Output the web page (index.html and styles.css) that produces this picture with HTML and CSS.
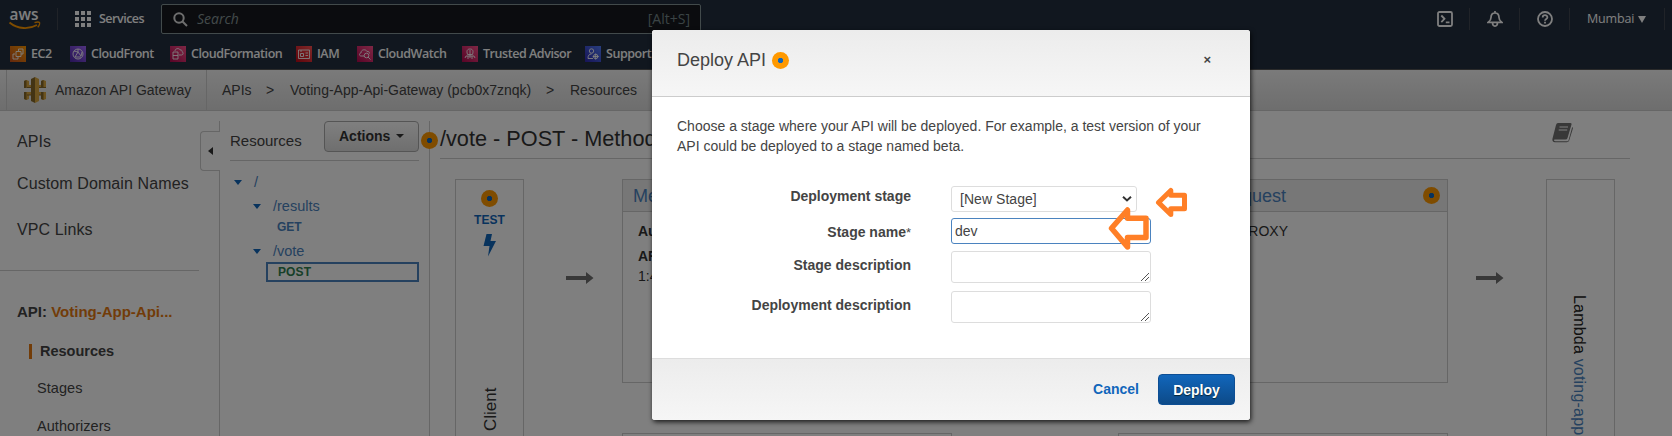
FILE: index.html
```html
<!DOCTYPE html>
<html lang="en">
<head>
<meta charset="utf-8">
<title>API Gateway</title>
<link rel="stylesheet" href="styles.css">
</head>
<body>
<div class="page">
  <header class="nav">
    <div class="nav-top">
      <svg class="aws" width="32" height="22" viewBox="0 0 32 22"><text x="0.5" y="11.5" class="aws-text" textLength="29" lengthAdjust="spacingAndGlyphs">aws</text><path d="M0.5 14.500C9 21.500 20 21.500 28 17" fill="none" stroke="#f90" stroke-width="1.900"/><path d="M25.500 14.700c2-.9 4.500-.8 5-.2s-.1 3-1.800 4.800" fill="none" stroke="#f90" stroke-width="1.300"/></svg>
      <i class="rule"></i>
      <svg class="grid" width="16" height="16" viewBox="0 0 16 16" fill="#fff"><path d="M0 0h4v4H0zM6 0h4v4H6zM12 0h4v4h-4zM0 6h4v4H0zM6 6h4v4H6zM12 6h4v4h-4zM0 12h4v4H0zM6 12h4v4H6zM12 12h4v4h-4z"/></svg>
      <span class="services">Services</span>
      <div class="search">
        <svg width="15" height="15" viewBox="0 0 15 15" fill="none" stroke="#ddd" stroke-width="2"><circle cx="6" cy="6" r="4.700"/><path d="M9.500 9.500l4.500 4.500"/></svg>
        <span class="search-hint">Search</span><span class="search-key">[Alt+S]</span>
      </div>
      <div class="tools">
        <svg width="16" height="16" viewBox="0 0 16 16" fill="none" stroke="#fff" stroke-width="1.800"><rect x="1" y="1" width="14" height="14" rx="1.500"/><path d="M4.300 4.500l3.200 3.300-3.200 3.400M8.800 11.300h3.700"/></svg>
        <i class="rule"></i>
        <svg width="16" height="16" viewBox="0 0 16 16" fill="none" stroke="#fff" stroke-width="1.700"><path d="M8 0v2M1.300 11.300h13.400c-2-1.500-2.700-3-2.700-4.800C12 3.500 10.500 2 8 2S4 3.500 4 6.500c0 1.800-.7 3.300-2.700 4.800zM5.500 11.500c0 4.700 5 4.700 5 0"/></svg>
        <i class="rule"></i>
        <svg width="16" height="16" viewBox="0 0 16 16" fill="none" stroke="#fff" stroke-width="1.800"><circle cx="8" cy="8" r="7"/><path d="M5.700 6.500c0-3 4.700-3 4.700-.2C10.400 8 8 7.800 8 9.700M8 10.800v1.700"/></svg>
        <i class="rule"></i>
        <span class="region">Mumbai</span><i class="tri"></i><i class="rule"></i>
      </div>
    </div>
    <div class="favs">
      <span class="fav"><svg class="ico orange" viewBox="0 0 16 16"><path d="M6 5.500h5v5H6zM5 8H3v5h5v-2M8.500 5V3H13v5h-2"/></svg><b class="w-ec2">EC2</b></span>
      <span class="fav"><svg class="ico purple" viewBox="0 0 16 16"><circle cx="8" cy="8" r="5"/><path d="M4 5l4 1 3 4M8 6l-3 5M8 3v3M5 11h6M12 6l-1 4"/></svg><b class="w-cf">CloudFront</b></span>
      <span class="fav"><svg class="ico pink" viewBox="0 0 16 16"><path d="M3 6h5v7H3zM3 9.500h5M5 5c0-3 5-3 5-1 2-.5 2 1 2 1.500 1.500.5 1.500 3.500-.5 3.500H9"/></svg><b class="w-cfn">CloudFormation</b></span>
      <span class="fav"><svg class="ico red" viewBox="0 0 16 16"><path d="M2.500 4h11v8.500h-11zM5 4v2M4.500 7.500h3v3h-3zM9.500 7h2.500M9.500 9.500h2.500"/></svg><b class="w-iam">IAM</b></span>
      <span class="fav"><svg class="ico pink" viewBox="0 0 16 16"><path d="M7 10H4C2 10 2 7 4 7c0-4 5-4 6-1.500 2-.5 2.500 1 2.500 2"/><circle cx="9.500" cy="9.500" r="2.300"/><path d="M11 11l2.500 2.500"/></svg><b class="w-cw">CloudWatch</b></span>
      <span class="fav"><svg class="ico pink" viewBox="0 0 16 16"><path d="M5.500 8.500C4 4 6 3 8 3s4 1 2.500 5.500zM8 4v8M4 10h8M4 10l-1 2M6 10v3M10 10v3M12 10l1 2"/></svg><b class="w-ta">Trusted Advisor</b></span>
      <span class="fav"><svg class="ico blue" viewBox="0 0 16 16"><circle cx="6.500" cy="5" r="2.200"/><path d="M8 12.500H3c0-3 1-4.500 3.500-4.500"/><circle cx="10.700" cy="10.500" r="2.200"/><path d="M10.700 7.500v6M7.700 10.500h6"/></svg><b class="w-su">Support</b></span>
    </div>
  </header>
  <div class="crumbs">
    <div class="product">
      <svg width="22" height="26" viewBox="0 0 22 26"><path fill="#d9a741" d="M2.500 3L5 4v4h12V4l2.500-1L22 4v7H0V4zM0 15h22v7l-2.500 1-2.500-1v-4H5v4l-2.500 1L0 22z"/><path fill="#876929" d="M0 4l2.500-1v8H0zM0 15h2.500v8L0 22zM17 4l2.500-1v8H17zM17 15h2.500v8l-2.500-1zM7 2l4-2v26l-4-2z"/><path fill="#d9a741" d="M11 0l4 2v22l-4 2z"/><path fill="#876929" d="M3 10h4v1H3zM15 10h7v1h-7zM3 17.500h4v1H3zM15 17.500h4v1h-4z"/></svg>
      <span>Amazon API Gateway</span>
    </div>
    <span class="c1">APIs</span><span class="c2">&gt;</span><span class="c3">Voting-App-Api-Gateway (pcb0x7znqk)</span><span class="c2">&gt;</span><span class="c4">Resources</span>
  </div>
  <div class="body">
    <nav class="side">
      <div class="side-main"><a>APIs</a><a>Custom Domain Names</a><a>VPC Links</a></div>
      <div class="api-name">API: <em>Voting-App-Api...</em></div>
      <div class="side-sub"><b>Resources</b><a>Stages</a><a>Authorizers</a></div>
    </nav>
    <div class="gutter"><div class="tab"><i></i></div></div>
    <section class="tree">
      <div class="tree-head"><span>Resources</span><button class="actions">Actions<i></i></button></div>
      <div class="node n0"><i></i>/</div>
      <div class="node n1"><i></i>/results</div>
      <div class="verb get">GET</div>
      <div class="node n2"><i></i>/vote</div>
      <div class="verb post">POST</div>
      <i class="dot tree-dot"></i>
    </section>
    <main class="main">
      <div class="main-head"><h1>/vote - POST - Method Execution</h1>
        <svg width="22" height="20" viewBox="0 0 22 20"><path fill="#707070" d="M6 0h12.500q1.500 0 1 1.500L15.500 15q-.4 1.500-2 1.500H3q-1.500.2-1 1t1.500.8h12q.8 0 1-.8L20.200 4q1 .5.7 1.500l-3.700 12q-.6 1.800-2.400 1.800H3Q0 19 .4 16L4 2q.5-2 2-2z"/><path stroke="#fff" stroke-width="1.200" d="M7.500 4h8.500M6.700 7h8.500"/></svg>
      </div>
      <div class="flow">
        <div class="client"><i class="dot"></i><b>TEST</b><svg width="14" height="23" viewBox="0 0 14 23"><path fill="#1166bb" d="M3.500 0H9L7.500 7H13L5 22.500 6.500 12H.5z"/></svg><span>Client</span></div>
        <div class="arrow"><svg width="28" height="12" viewBox="0 0 28 12"><path fill="#707070" d="M0 4h20V0l7.500 6L20 12V8H0z"/></svg></div>
        <div class="stack">
          <div class="card"><h2>Method Request</h2><p><b>Auth:</b></p><p><b>ARN:</b></p><p class="tight">1:4</p></div>
          <div class="card"></div>
        </div>
        <div class="stack second">
          <div class="card right"><h2>Integration Request<i class="dot"></i></h2><p>Type: LAMBDA_PROXY</p></div>
          <div class="card"></div>
        </div>
        <div class="arrow"><svg width="28" height="12" viewBox="0 0 28 12"><path fill="#707070" d="M0 4h20V0l7.500 6L20 12V8H0z"/></svg></div>
        <div class="lambda"><span>Lambda <em>voting-app</em></span></div>
      </div>
    </main>
  </div>
</div>
<div class="overlay">
  <div class="modal">
    <div class="modal-head"><span>Deploy API</span><i class="dot"></i><b>×</b></div>
    <div class="modal-body">
      <p>Choose a stage where your API will be deployed. For example, a test version of your API could be deployed to a stage named beta.</p>
      <div class="form">
        <label class="l1">Deployment stage</label><div class="field select">[New Stage]<svg width="10" height="6" viewBox="0 0 10 6"><path d="M1 .8l4 3.700L9 .8" fill="none" stroke="#333" stroke-width="2"/></svg></div>
        <label class="l2">Stage name<small>*</small></label><div class="field input">dev</div>
        <label class="l3">Stage description</label><div class="field area"><svg width="8" height="8" viewBox="0 0 8 8"><path d="M0 8L8 0M4 8l4-4" stroke="#555"/></svg></div>
        <label class="l3">Deployment description</label><div class="field area"><svg width="8" height="8" viewBox="0 0 8 8"><path d="M0 8L8 0M4 8l4-4" stroke="#555"/></svg></div>
      </div>
    </div>
    <div class="modal-foot"><a>Cancel</a><button>Deploy</button></div>
    <svg class="note small" width="32" height="32" viewBox="0 0 32 32"><path d="M3.500 15.500L15.800 3.500V8.300H29.500V21.800H15.800V27.500z"/></svg>
    <svg class="note large" width="41" height="46" viewBox="0 0 41 46"><path d="M3.500 23.300L19.500 5V13.200H38V32.500H19.500V42z"/></svg>
  </div>
</div>
</body>
</html>
```
FILE: styles.css
```css
* { box-sizing: border-box; }
body { margin: 0; width: 1672px; height: 436px; overflow: hidden; position: relative; font: 14px/20px "Liberation Sans", Arial, sans-serif; color: #444; background: #fff; }
em, i { font-style: normal; }
i { display: block; flex: none; }
svg { display: block; flex: none; }
.page { height: 436px; display: flex; flex-direction: column; overflow: hidden; }

.nav { height: 70px; flex: none; background: #232f3e; border-bottom: 1px solid #555; color: #fff; font-family: "Open Sans", "Noto Sans", sans-serif; }
.nav-top { height: 38px; display: flex; align-items: center; padding-left: 9px; }
.aws { margin-right: 16px; overflow: visible; }
.aws-text { font: 600 17px "Open Sans", sans-serif; fill: #fff; }
.rule { width: 1px; height: 22px; background: #414750; }
.grid { margin-left: 17px; }
.services { margin-left: 8px; width: 62px; font-size: 12.500px; font-weight: 600; letter-spacing: -.5px; }
.search { width: 540px; height: 30px; border: 1px solid #849596; border-radius: 2px; background: #16191f; display: flex; align-items: center; padding: 0 10px 0 11px; color: #879596; }
.search-hint { margin-left: 9px; font-style: italic; }
.search-key { margin-left: auto; color: #75878a; }
.tools { margin-left: auto; display: flex; align-items: center; padding-right: 7px; }
.tools > svg { margin-right: 16px; }
.tools > .rule + svg { margin-left: 17px; }
.region { margin-left: 17px; width: 51px; font-size: 12.500px; letter-spacing: -.15px; }
.tri { border: 4px solid transparent; border-top: 7px solid #fff; border-bottom: 0; margin-right: 18px; }
.favs { height: 32px; display: flex; align-items: center; padding-left: 10px; }
.fav { display: flex; align-items: center; gap: 5px; height: 16px; }
.fav b { font-size: 12.500px; font-weight: 600; letter-spacing: -.45px; white-space: nowrap; }
.ico { width: 16px; height: 16px; fill: none; stroke: #fff; stroke-width: .9; }
.orange { background: linear-gradient(45deg, #c8511b, #f90); }
.purple { background: linear-gradient(45deg, #4d27a8, #a166ff); }
.pink { background: linear-gradient(45deg, #b0084d, #ff4f8b); }
.red { background: linear-gradient(45deg, #bd0816, #ff5252); }
.blue { background: linear-gradient(45deg, #2e27ad, #527fff); }
.w-ec2 { width: 39px; } .w-cf { width: 79px; } .w-cfn { width: 105px; } .w-iam { width: 40px; } .w-cw { width: 84px; } .w-ta { width: 102px; }

.crumbs { height: 41px; flex: none; display: flex; align-items: center; background: linear-gradient(#f5f5f5, #dcdcdc); border-bottom: 1px solid #ccc; }
.product { margin-left: 6px; width: 201px; height: 40px; border: solid #ccc; border-width: 0 1px; display: flex; align-items: center; gap: 9px; padding-left: 17px; }
.c1 { margin-left: 15px; width: 44px; }
.c2 { width: 24px; }
.c3 { width: 256px; white-space: nowrap; }

.body { flex: 1; display: flex; min-height: 0; }
.side { width: 200px; flex: none; font-size: 16px; }
.side-main { width: 199px; height: 160px; border-bottom: 1px solid #ccc; padding: 21px 0 0 17px; display: flex; flex-direction: column; letter-spacing: .1px; }
.side-main a:nth-child(2) { margin-top: 22px; }
.side-main a:nth-child(3) { margin-top: 26px; }
.api-name { margin: 31px 0 0 17px; font-size: 15px; font-weight: bold; }
.api-name em { color: #e47911; }
.side-sub { display: flex; flex-direction: column; padding-left: 29px; font-size: 14.500px; }
.side-sub b { margin-top: 22px; line-height: 15px; border-left: 3px solid #e47911; padding-left: 8px; }
.side-sub a { padding-left: 8px; margin-top: 21px; line-height: 17px; letter-spacing: .05px; }
.gutter { width: 20px; flex: none; margin-top: 10px; position: relative; border-right: 1px solid #ccc; }
.tab { position: absolute; left: 0; top: 10px; width: 20px; height: 40px; border: 1px solid #ccc; border-right: 0; border-radius: 4px 0 0 4px; background: #fff; padding: 15px 0 0 7px; }
.tab i { width: 5px; border: 4.500px solid transparent; border-right: 5px solid #333; border-left: 0; }
.tree { width: 210px; flex: none; margin-top: 10px; padding: 0 10px; border-right: 1px solid #ccc; position: relative; color: #4b83bf; font-size: 14.500px; }
.tree-head { height: 40px; border-bottom: 1px solid #ccc; display: flex; color: #444; font-size: 15px; }
.tree-head span { width: 94px; padding-top: 10px; }
.actions { width: 95px; height: 31px; border: 1px solid #aaa; border-radius: 4px; background: linear-gradient(#fff, #dedede); color: #333; font: bold 14px "Liberation Sans", sans-serif; display: flex; align-items: center; gap: 6px; padding: 0 0 1px 14px; }
.actions i { border: 4px solid transparent; border-top-color: #333; border-bottom: 0; }
.node { display: flex; align-items: center; height: 20px; }
.node i { border: 4.500px solid transparent; border-top: 5px solid #1166bb; border-bottom: 0; margin-right: 12px; }
.n0 { margin-top: 11px; padding-left: 4px; }
.n1 { margin-top: 4px; padding-left: 23px; }
.n2 { padding-left: 23px; margin-top: 3px; }
.verb { font-size: 12px; font-weight: bold; }
.get { margin-left: 47px; height: 22px; line-height: 23px; }
.post { margin: 1px 0 0 36px; height: 20px; border: 2px solid #4b83bf; padding-left: 10px; line-height: 16px; color: #2f8050; letter-spacing: .1px; }
.dot { width: 17px; height: 17px; border-radius: 50%; background: radial-gradient(circle, #1166bb 2.300px, #f90 3px); }
.tree-dot { position: absolute; right: -9px; top: 11px; z-index: 2; }
.main { width: 1190px; margin-left: 10px; flex: none; padding-top: 10px; }
.main-head { height: 38px; border-bottom: 1px solid #ccc; display: flex; justify-content: space-between; padding: 2px 56px 0 0; color: #333; }
h1 { margin: 3px 0 0; font-size: 21.700px; line-height: 26px; font-weight: normal; }
.flow { margin-top: 20px; padding-left: 15px; display: flex; }
.client, .lambda { width: 69px; height: 400px; border: 1px solid #ccc; }
.client { display: flex; flex-direction: column; align-items: center; padding-top: 10px; }
.client b { font-size: 12px; color: #1166bb; margin: 3px 0; letter-spacing: .1px; line-height: 21px; }
.client span { writing-mode: vertical-rl; transform: rotate(180deg); font-size: 17px; height: 46px; margin: 128px 0 0 2px; color: #333; }
.arrow { width: 98px; padding: 93px 0 0 42px; }
.stack { width: 330px; display: flex; flex-direction: column; gap: 50px; }
.second { margin-left: 166px; }
.card { height: 204px; border: 1px solid #ccc; color: #333; }
.card h2 { margin: 0 0 9px; height: 32px; border-bottom: 1px solid #ccc; background: #eee; font-size: 18px; font-weight: normal; line-height: 33px; color: #4b83bf; padding: 0 7px 0 10px; display: flex; }
.card p { margin: 0 0 5px 15px; }
.card .tight { margin-top: -5px; }
.right { text-align: right; }
.right h2 { justify-content: flex-end; padding-left: 0; }
.right h2 .dot { margin: 7px 0 0 137px; }
.right p { margin-right: 159px; }
.stack + .arrow { padding-left: 28px; }
.lambda { padding: 115px 0 0 22px; }
.lambda span { writing-mode: vertical-rl; font-size: 16px; letter-spacing: .2px; white-space: nowrap; color: #222; }
.lambda em { color: #4b83bf; }

.overlay { position: absolute; z-index: 5; inset: 0; background: rgba(0, 0, 0, .5); padding: 30px 0 0 652px; }
.modal { position: relative; width: 598px; height: 390px; background: #fff; border-radius: 3px; box-shadow: 1px 2px 5px rgba(0, 0, 0, .8); overflow: hidden; display: flex; flex-direction: column; }
.modal-head { height: 67px; flex: none; display: flex; align-items: flex-start; background: linear-gradient(#ececec, #f6f6f6); border-bottom: 1px solid #ccc; padding: 20px 39px 0 25px; font-size: 18px; }
.modal-head .dot { margin: 2px 0 0 6px; }
.modal-head b { margin-left: auto; font-size: 13px; line-height: 19px; }
.modal-body { height: 261px; padding: 19px 45px 0 25px; }
.modal-body p { margin: 0; }
.form { margin-top: 30px; display: grid; grid-template-columns: 234px 200px; column-gap: 40px; grid-template-rows: 32px 33px 40px 40px; }
.form label { text-align: right; font-weight: bold; }
small { font-weight: normal; font-size: 13px; }
.l2, .l3 { padding-top: 4px; }
.field { border: 1px solid #ddd; border-radius: 3px; background: #fff; }
.select { width: 186px; height: 26px; display: flex; justify-content: space-between; align-items: center; padding: 0 4px 0 8px; letter-spacing: .05px; }
.input { height: 26px; border-color: #4b83bf; padding: 2px 3px; }
.area { height: 32px; display: flex; align-items: flex-end; justify-content: flex-end; padding: 1px; }
.modal-foot { height: 62px; border-top: 1px solid #ddd; background: linear-gradient(#ececec, #f6f6f6); display: flex; justify-content: flex-end; padding: 15px 15px 0 0; gap: 19px; }
.modal-foot a { font-weight: bold; color: #1166bb; line-height: 31px; }
.modal-foot button { width: 77px; height: 31px; border: 1px solid #0d4e94; border-radius: 4px; background: linear-gradient(#1166bb, #0d4a88); color: #fff; font: bold 14px "Liberation Sans", sans-serif; text-shadow: 0 1px 1px #023; padding: 0; }
.note { position: absolute; fill: none; stroke: #ff7f27; stroke-width: 5px; stroke-linejoin: round; }
.small { left: 503px; top: 157px; }
.large { left: 456px; top: 175px; stroke-width: 5.500px; }
```
